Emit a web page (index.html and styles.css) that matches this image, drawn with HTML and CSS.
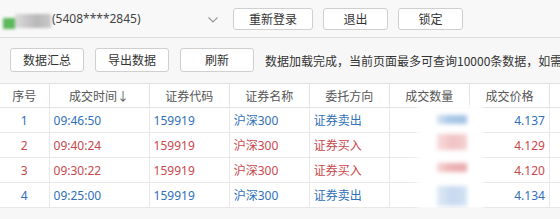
FILE: index.html
```html
<!DOCTYPE html>
<html lang="zh">
<head>
<meta charset="utf-8">
<link rel="stylesheet" href="styles.css">
</head>
<body>
<div class="topbar">
  <div class="logo"><span class="logo-green"></span><span class="logo-gray"></span></div>
  <span class="account">(5408****2845)</span>
  <svg class="chev" width="12" height="8" viewBox="0 0 12 8"><path d="M1.5 1.5 L6 6 L10.5 1.5" fill="none" stroke="#999" stroke-width="1.1"/></svg>
  <button class="btn btn-login">重新登录</button>
  <button class="btn btn-sm">退出</button>
  <button class="btn btn-sm">锁定</button>
</div>
<div class="toolbar">
  <button class="btn btn-tool">数据汇总</button>
  <button class="btn btn-tool">导出数据</button>
  <button class="btn btn-tool">刷新</button>
  <span class="status">数据加载完成，当前页面最多可查询10000条数据，如需</span>
</div>
<div class="tablewrap">
<table class="grid">
  <colgroup>
    <col class="c-no"><col class="c-time"><col class="c-w80"><col class="c-w80"><col class="c-w80"><col class="c-w80"><col class="c-w80"><col class="c-w80">
  </colgroup>
  <thead>
    <tr><th>序号</th><th>成交时间↓</th><th>证券代码</th><th>证券名称</th><th>委托方向</th><th>成交数量</th><th>成交价格</th><th></th></tr>
  </thead>
  <tbody>
    <tr class="sell"><td class="ctr">1</td><td>09:46:50</td><td>159919</td><td>沪深300</td><td>证券卖出</td><td></td><td class="num">4.137</td><td></td></tr>
    <tr class="buy"><td class="ctr">2</td><td>09:40:24</td><td>159919</td><td>沪深300</td><td>证券买入</td><td></td><td class="num">4.129</td><td></td></tr>
    <tr class="buy"><td class="ctr">3</td><td>09:30:22</td><td>159919</td><td>沪深300</td><td>证券买入</td><td></td><td class="num">4.120</td><td></td></tr>
    <tr class="sell"><td class="ctr">4</td><td>09:25:00</td><td>159919</td><td>沪深300</td><td>证券卖出</td><td></td><td class="num">4.134</td><td></td></tr>
  </tbody>
</table>
<div class="mask">
  <span class="blk b1"></span>
  <span class="blk b2"></span>
  <span class="blk b3"></span>
  <span class="blk b4"></span>
</div>
</div>
</body>
</html>
```
FILE: styles.css
```css
html, body {
  margin: 0;
  padding: 0;
  background: #f7f7f7;
  font-family: "Noto Sans", "Noto Sans CJK SC", sans-serif;
  font-size: 12px;
  color: #333;
  width: 560px;
  height: 219px;
  overflow: hidden;
}
.topbar {
  display: flex;
  align-items: center;
  border-bottom: 1px solid #dcdcdc;
  background: #f8f8f8;
  box-sizing: border-box;
  height: 38px;
  white-space: nowrap;
}
.logo {
  flex: none;
  width: 52px;
  height: 26px;
  display: flex;
  align-items: center;
  filter: blur(1.5px);
}
.logo-green {
  width: 12px;
  height: 11px;
  margin-left: 3px;
  margin-top: 10px;
  background: #5cb85c;
}
.logo-gray {
  width: 36px;
  height: 14px;
  margin-top: 4px;
  background: linear-gradient(90deg, #dcdcdc, #b8b8b8 60%, #c9c9c9);
}
.account {
  flex: none;
  font-size: 12px;
  color: #444;
  width: 81px;
}
.chev {
  flex: none;
  margin-left: 74px;
  margin-top: 2px;
}
.btn {
  flex: none;
  font-family: "Noto Sans CJK SC", "Noto Sans", sans-serif;
  font-size: 12px;
  color: #333;
  background: #fff;
  border: 1px solid #cfcfcf;
  border-radius: 3px;
  padding: 0;
  height: 22px;
  line-height: 20px;
}
.btn-login {
  width: 80px;
  margin-left: 14px;
}
.btn-sm {
  width: 65px;
  margin-left: 10px;
}
.toolbar {
  height: 45px;
  display: flex;
  align-items: center;
  padding-left: 10px;
  white-space: nowrap;
  box-sizing: border-box;
  padding-bottom: 1px;
  overflow: hidden;
}
.btn-tool {
  width: 74px;
  height: 24px;
  margin-right: 11px;
}
.status {
  flex: none;
  font-family: "Noto Sans CJK SC", sans-serif;
  font-size: 12px;
  color: #333;
}
.tablewrap {
  position: relative;
  overflow: hidden;
  width: 560px;
}
.grid {
  border-collapse: collapse;
  table-layout: fixed;
  width: 630px;
  background: #fff;
  font-family: "Noto Sans", "Noto Sans CJK SC", sans-serif;
  font-size: 12px;
}
.c-no { width: 49px; }
.c-time { width: 100px; }
.c-w80 { width: 80px; }
.grid th {
  height: 23px;
  font-weight: normal;
  color: #555;
  border: 1px solid #e2e2e2;
  border-left: none;
  padding: 0;
  text-align: center;
  font-family: "Noto Sans CJK SC", sans-serif;
}
.grid td {
  height: 24px;
  border-bottom: 1px solid #e8e8e8;
  border-right: 1px solid #e8e8e8;
  padding: 0 4px;
  white-space: nowrap;
}
.grid .ctr { text-align: center; }
.grid .num { text-align: right; }
.sell td { color: #2f70b8; }
.buy td { color: #c9484c; }
.mask {
  position: absolute;
  left: 417px;
  top: 22px;
  width: 66px;
  height: 104px;
  background: #fff;
  filter: blur(2px);
}
.blk {
  position: absolute;
  left: 20px;
  width: 30px;
}
.b1 { top: 10px; height: 9px; background: linear-gradient(90deg, #d6e3f2, #a9c7e7 40%, #a3c3e6); }
.b2 { top: 29px; height: 16px; background: linear-gradient(90deg, #f8dcdc, #f1c3c5 50%, #f3cfd0); }
.b3 { top: 58px; height: 9px; background: linear-gradient(90deg, #f6d6d6, #eeb3b6 40%, #eba9ad); }
.b4 { top: 81px; height: 20px; background: linear-gradient(90deg, #e0eaf6, #c6d9ef 50%, #d3e2f3); }
```
